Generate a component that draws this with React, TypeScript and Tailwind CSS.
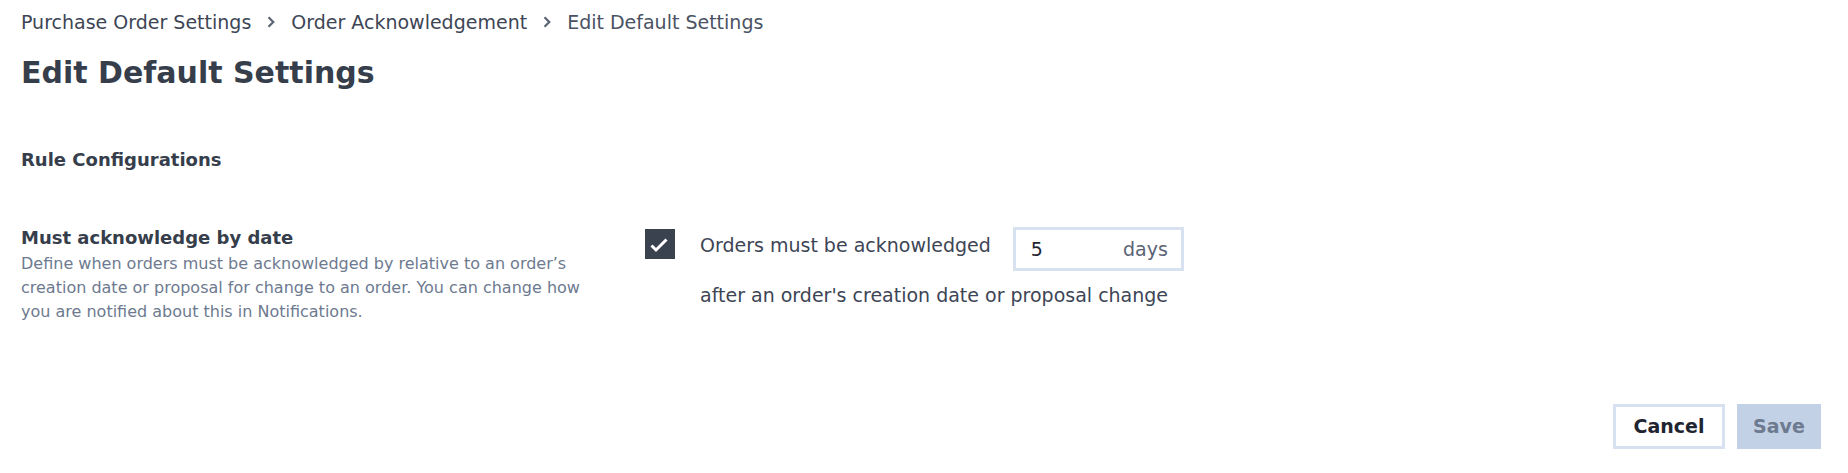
import React from "react";

const Chevron = () => (
  <svg className="mx-[15px] shrink-0" width="10" height="14" viewBox="0 0 10 14" fill="none">
    <path d="M2.5 2.2 L7.3 7 L2.5 11.8" stroke="#5b6475" strokeWidth="2.2" />
  </svg>
);

export default function App() {
  return (
    <div className="min-h-[473px] w-full bg-white text-[#363e4b]" style={{ fontFamily: "'DejaVu Sans', 'Noto Sans', sans-serif" }}>
      <div className="px-[21px] pt-[10px]">
        <nav className="flex items-center text-[19px] leading-[24px] text-[#3d4555]">
          <span>Purchase Order Settings</span>
          <Chevron />
          <span>Order Acknowledgement</span>
          <Chevron />
          <span className="text-[#4a5263]">Edit Default Settings</span>
        </nav>
        <h1 className="mt-[19px] text-[30px] font-bold leading-[40px] text-[#363e4b]">Edit Default Settings</h1>
        <h2 className="mt-[55px] text-[18px] font-bold leading-[24px]">Rule Configurations</h2>

        <div className="mt-[54px] flex">
          <div className="w-[624px] shrink-0">
            <div className="text-[18px] font-bold leading-[24px]">Must acknowledge by date</div>
            <p className="mt-[2px] w-[580px] text-[16px] leading-[24px] text-[#6d7a8f]">
              Define when orders must be acknowledged by relative to an order’s creation date or proposal for change to an order. You can change how you are notified about this in Notifications.
            </p>
          </div>
          <div className="flex pt-[3px]">
            <div className="h-[30px] w-[30px] shrink-0 bg-[#3a4250]">
              <svg width="30" height="30" viewBox="0 0 30 30" fill="none">
                <path d="M6.5 16.5 L11 21 L21.5 10.5" stroke="white" strokeWidth="3" />
              </svg>
            </div>
            <div className="ml-[25px]">
              <div className="flex items-start">
                <span className="mt-[4px] text-[19px] leading-[24px] text-[#3d4555]">Orders must be acknowledged</span>
                <div className="-mt-[2px] ml-[22px] flex h-[44px] w-[171px] items-center justify-between border-[3px] border-[#d7e1ef] pl-[15px] pr-[13px] text-[19px]">
                  <span className="text-[#1f2530]">5</span>
                  <span className="text-[#5b6475]">days</span>
                </div>
              </div>
              <div className="mt-[12px] text-[19px] leading-[24px] text-[#3d4555]">after an order's creation date or proposal change</div>
            </div>
          </div>
        </div>
      </div>
      <div className="mt-[80px] flex justify-end gap-[12px] pr-[27px]">
        <button className="h-[45px] w-[112px] border-[3px] border-[#d7e1ef] bg-white text-[19px] font-bold text-[#1f2530]">Cancel</button>
        <button className="h-[45px] w-[84px] bg-[#c3d1e6] text-[19px] font-bold text-[#6d7a8f]">Save</button>
      </div>
    </div>
  );
}
